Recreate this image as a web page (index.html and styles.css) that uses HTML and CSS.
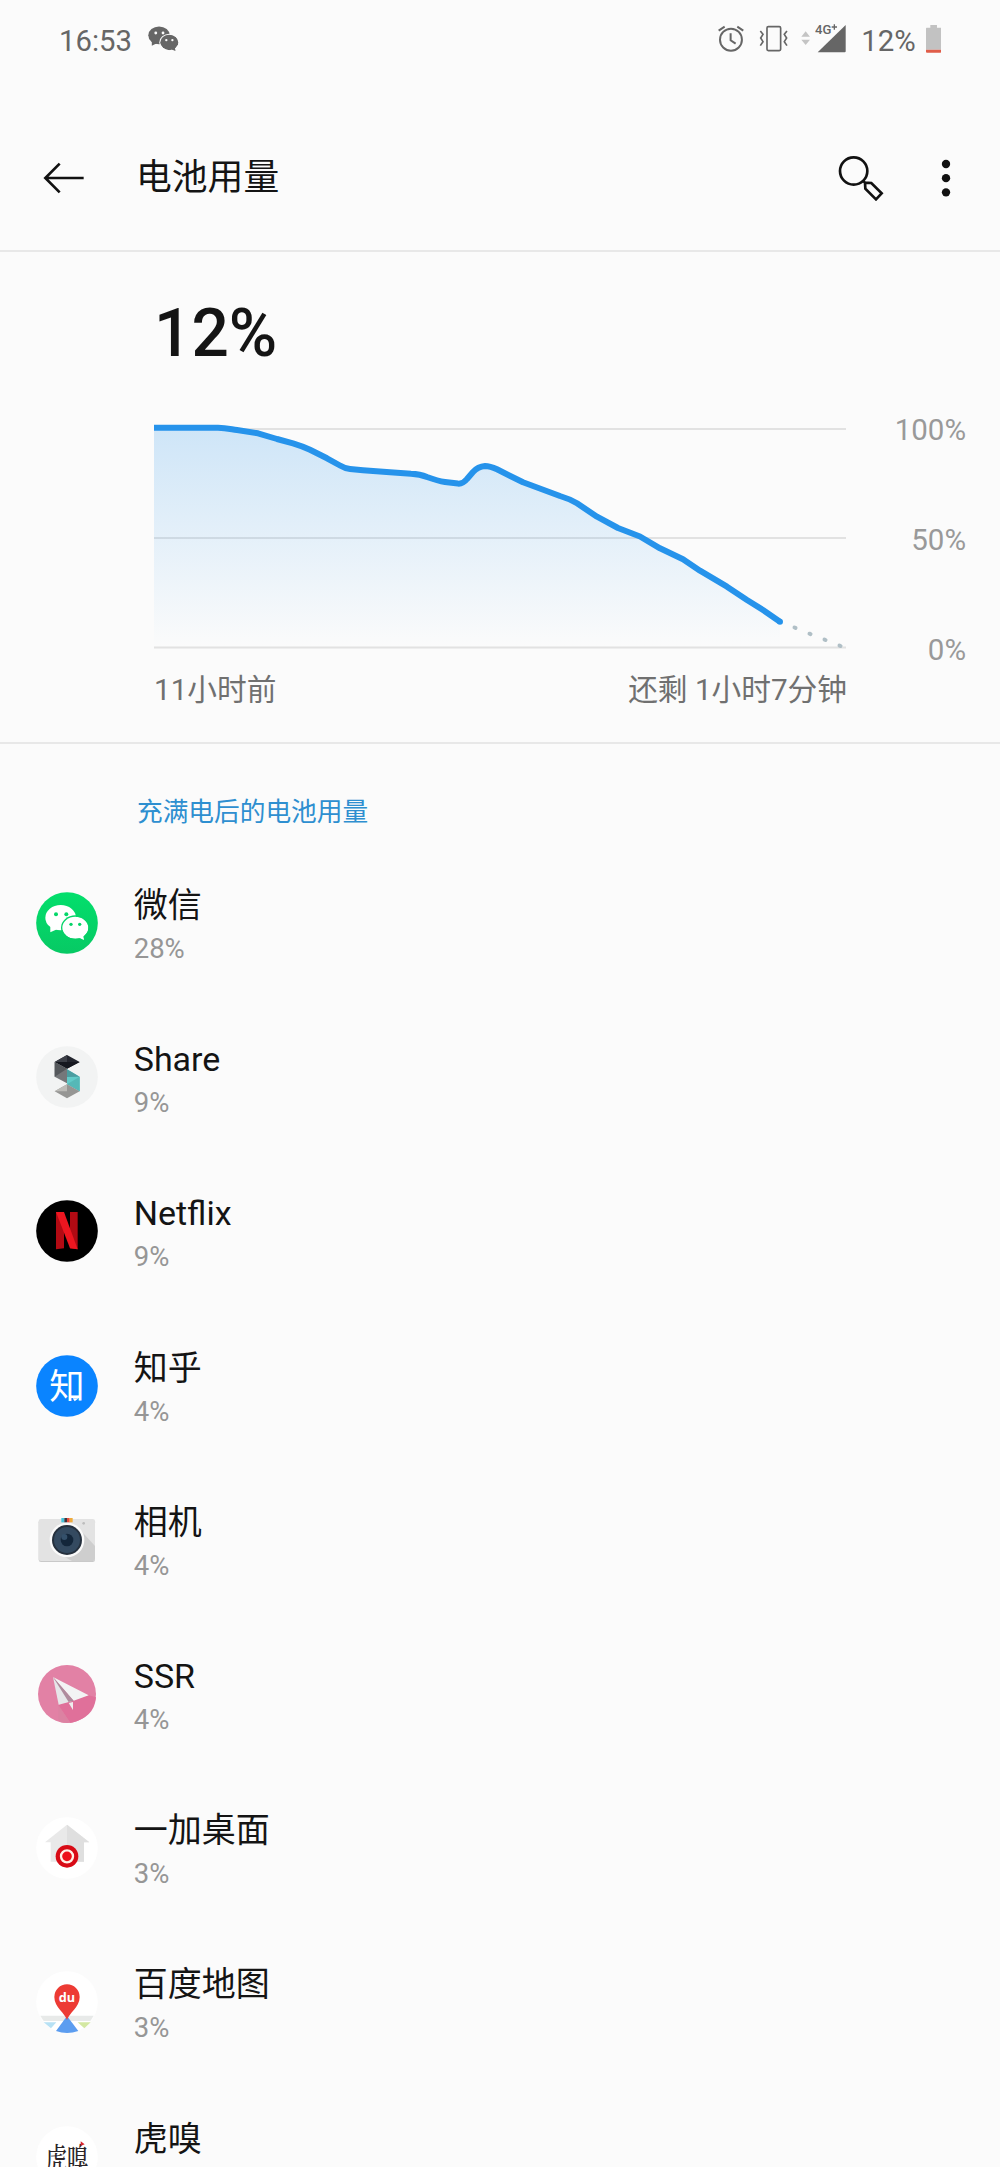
FILE: index.html
```html
<!DOCTYPE html>
<html lang="zh-CN">
<head>
<meta charset="utf-8">
<title>电池用量</title>
<link rel="stylesheet" href="styles.css">
</head>
<body>
<svg class="defs" width="0" height="0" aria-hidden="true">
  <defs>
    <mask id="eyes" maskUnits="userSpaceOnUse" x="-96" y="-96" width="192" height="192">
      <rect x="-96" y="-96" width="192" height="192" fill="#fff"/>
      <circle cx="-33" cy="-26" r="6" fill="#000"/><circle cx="-2" cy="-26" r="6" fill="#000"/>
      <ellipse cx="25" cy="14" rx="43" ry="37" fill="#000"/>
      <path d="M34 45 51 51 49 34Z" fill="#fff"/>
      <ellipse cx="25" cy="14" rx="39" ry="33" fill="#fff"/>
      <circle cx="12" cy="4" r="5" fill="#000"/><circle cx="38" cy="4" r="5" fill="#000"/>
    </mask>
    <g id="chat" mask="url(#eyes)">
      <ellipse cx="-19" cy="-16" rx="46" ry="38"/>
      <path d="M-50 9-50 28-28 18Z"/>
      <ellipse cx="25" cy="14" rx="39" ry="33"/>
      <path d="M32 43 51 51 49 34Z"/>
    </g>
  </defs>
</svg>

<header class="status">
  <span class="status-text">16:53</span>
  <svg class="status-chat" viewBox="-66 -56 132 111" width="31" height="26" fill="#666"><use href="#chat"/></svg>
  <div class="status-right">
    <svg viewBox="53 75 80 84" width="26.6" height="28" fill="none" stroke="#666" stroke-width="6">
      <circle cx="92" cy="119" r="33"/><path d="M91 100V121L106 131M55 92 73 80M111 80 129 92"/>
    </svg>
    <svg class="vibrate" viewBox="176 75 88 84" width="29.3" height="28" fill="none" stroke="#666" stroke-width="5">
      <rect x="200" y="80" width="41" height="72" rx="4"/>
      <path d="M180 93 188 103 181 114 188 125 180 137M260 93 252 103 259 114 252 125 260 137"/>
    </svg>
    <svg class="arrows" viewBox="301 75 28 84" width="9.3" height="28" fill="#c4c4c4"><path d="M302 110 315 94 328 110ZM302 119H328L315 135Z"/></svg>
    <svg viewBox="341 70 95 89" width="31.7" height="29.7" class="signal">
      <path d="M349 158 433 76V155Q433 158 430 158Z" fill="#666"/>
      <text x="341" y="104" class="net" textLength="49" lengthAdjust="spacingAndGlyphs">4G</text><path d="M391 82H407M399 74V90" stroke="#666" stroke-width="4"/>
    </svg>
    <span class="status-text pct">12%</span>
    <svg viewBox="675 75 46 84" width="15.3" height="28"><path d="M677 83H688V75H708V83H719Q721 83 721 86V149H675V86Q675 83 677 83Z" fill="#c2c2c2"/><path d="M675 149H721V156Q721 158 718 158H678Q675 158 675 156Z" fill="#e05d49"/></svg>
  </div>
</header>

<nav class="bar">
  <svg viewBox="130 485 126 96" width="42" height="32" fill="none" stroke="#111" stroke-width="8"><path d="M252 533H138M180 490 137 533 180 576"/></svg>
  <h1>电池用量</h1>
  <svg class="search" viewBox="411 462 138 138" width="46" height="46" fill="none" stroke="#111" stroke-width="8">
    <circle cx="458" cy="510" r="41"/><path d="M487 540 492 545 511 546 542 577 525 595 493 563 492 545"/>
  </svg>
  <svg viewBox="720 476 30 114" width="10" height="38" fill="#111"><circle cx="735" cy="491" r="12.5"/><circle cx="735" cy="533.5" r="12.5"/><circle cx="735" cy="576" r="12.5"/></svg>
</nav>

<section class="battery">
  <div class="level">12%</div>
  <div class="chart">
    <svg class="plot" viewBox="154 420 692 232" width="692" height="232">
      <defs><linearGradient id="fade" gradientUnits="userSpaceOnUse" x1="0" y1="428" x2="0" y2="648"><stop offset="0" stop-color="#2693eb" stop-opacity=".21"/><stop offset="1" stop-color="#2693eb" stop-opacity="0"/></linearGradient></defs>
      <path d="M154 429H846M154 538H846M154 647.5H846" stroke="#e2e2e2" stroke-width="2"/>
      <path fill="url(#fade)" d="M154 427.7H218C226 428 230 429 237 430L258 433.3 277 439 293 443.3Q302 446 310 449.7L327 458.3 340 465.5Q345 468.5 350 469L363 470.2 390 472.3 411 473.7Q420 474 427 477 438 481 445 482L458 483.6Q463 484 467 479L473 472Q478 466.5 485 466 490 466 497 469.3L523 482.3 560 496Q570 499 577 503.3L597 516.7 618 528 640 536.5 660 548.3 683 559.3 700 570.7 727 586.7 747 600 763 610 780 621.7V648H154Z"/>
      <path fill="none" stroke="#2693eb" stroke-width="6" stroke-linejoin="round" d="M154 427.7H218C226 428 230 429 237 430L258 433.3 277 439 293 443.3Q302 446 310 449.7L327 458.3 340 465.5Q345 468.5 350 469L363 470.2 390 472.3 411 473.7Q420 474 427 477 438 481 445 482L458 483.6Q463 484 467 479L473 472Q478 466.5 485 466 490 466 497 469.3L523 482.3 560 496Q570 499 577 503.3L597 516.7 618 528 640 536.5 660 548.3 683 559.3 700 570.7 727 586.7 747 600 763 610 780 621.7"/>
      <circle cx="780" cy="621.7" r="3" fill="#2693eb"/>
      <path d="M794.5 627.5 795.5 627.9M809.5 633.7 810.5 634.1M824.5 639.6 825.5 640M839.5 645.6 840.5 646" stroke="#b0bfc6" stroke-width="4" stroke-linecap="round"/>
    </svg>
    <div class="scale"><span>100%</span><span>50%</span><span>0%</span></div>
  </div>
  <div class="times"><span>11小时前</span><span>还剩 1小时7分钟</span></div>
</section>

<main>
  <h2>充满电后的电池用量</h2>
  <ul class="apps">
    <li>
      <svg viewBox="-96 -96 192 192"><defs><linearGradient id="green" x2="0" y2="1"><stop stop-color="#03df6c"/><stop offset="1" stop-color="#07c964"/></linearGradient></defs><circle r="92.5" fill="url(#green)"/><use href="#chat" fill="#fff"/></svg>
      <div><b>微信</b><span>28%</span></div>
    </li>
    <li>
      <svg viewBox="-96 -96 192 192"><circle r="92.5" fill="#f2f3f3"/>
        <path d="M0-66 38-45 0-25-37-45Z" fill="#23252e"/><path d="M0-66V-45H-37Z" fill="#3c3f47"/><path d="M-37-45H38L0-25Z" fill="#15171f"/>
        <path d="M-37-45 0-25V19L-37-1Z" fill="#75777a"/><path d="M-37-45 0-25-37-1Z" fill="#55585c"/>
        <path d="M0-23 38-1V43L0 22Z" fill="#61cbc9"/><path d="M0 22 38-1V43Z" fill="#55b8b7"/><path d="M0-23 38-1 0 0Z" fill="#4b9da0"/>
        <path d="M0 22 38 43 0 64-37 43Z" fill="#969694"/><path d="M0 22V43H-37Z" fill="#bcbbb7"/>
      </svg>
      <div><b>Share</b><span>9%</span></div>
    </li>
    <li>
      <svg viewBox="-96 -96 192 192"><circle r="92.5"/><path d="M-33-57H-9V52L-33 55ZM9-57H32V55L9 52Z" fill="#b20a13"/><path d="M-33-57H-9L32 55 9 52Z" fill="#ed1620"/></svg>
      <div><b>Netflix</b><span>9%</span></div>
    </li>
    <li>
      <svg viewBox="-96 -96 192 192"><circle r="92.5" fill="#0a84ff"/><text class="zhi" x="-53" y="39">知</text><path d="M17 37H35L23 46Z" fill="#fff"/></svg>
      <div><b>知乎</b><span>4%</span></div>
    </li>
    <li>
      <svg viewBox="-96 -96 192 192"><rect x="-85" y="-60" width="169" height="126" rx="7" fill="#c9c9c9"/><rect x="-85" y="-63" width="169" height="126" rx="7" fill="#e3e3e3"/>
        <path d="M35-35 84 18V56Q84 63 77 63H15L-35 35Z" fill="#cecece"/>
        <path d="M-17-66H-8V-53H-17Z" fill="#46c2da"/><path d="M-8-66H0V-53H-8Z" fill="#3b3841"/><path d="M0-66H8V-53H0Z" fill="#e74a3b"/><path d="M8-66H17V-53H8Z" fill="#efab3c"/>
        <circle r="52" fill="#fafafa"/><circle r="45" fill="#25303d"/><circle r="39" fill="#344a60"/><circle r="19" fill="#13263a"/><circle cx="-8" cy="-9" r="9" fill="#34506a"/><circle cx="50" cy="-50" r="4" fill="#bdbdbd"/>
      </svg>
      <div><b>相机</b><span>4%</span></div>
    </li>
    <li>
      <svg viewBox="-96 -96 192 192"><circle r="87" fill="#e281a5"/><path d="M65 4 87 10Q82 72 10 87L-26 33Z" fill="#e0709a"/><path d="M-26 33 10 86-10 86Q-20 84-26 80Z" fill="#dc82a2"/>
        <path d="M-42-51 65 4 20 20Z" fill="#f3f3f4"/><path d="M-42-51 14 22-25 32Z" fill="#e6e6e9"/><path d="M-42-51 20 20 5 24Z" fill="#ae8b9d"/><path d="M5 27 18 24V48Z" fill="#eee"/>
      </svg>
      <div><b>SSR</b><span>4%</span></div>
    </li>
    <li>
      <svg viewBox="-96 -96 192 192"><circle r="92.5" fill="#fff"/><path d="M0-70-66-17H-49V41H51V-17H67Z" fill="#e9e9e9"/><path d="M0-70V41H51V-17H67Z" fill="#dfdfdf"/><circle cy="25" r="34" fill="#d80b16"/><circle cy="25" r="18" fill="#ed1018" stroke="#fff0e6" stroke-width="7"/></svg>
      <div><b>一加桌面</b><span>3%</span></div>
    </li>
    <li>
      <svg viewBox="-96 -96 192 192"><circle r="92.5" fill="#fff"/><path d="M-80 41H80L70 57H-70Z" fill="#e8eae9"/><path d="M-70 61H-32L-48 79Z" fill="#b7e1f4"/><path d="M32 61H71L52 79Z" fill="#d3e8a2"/>
        <path d="M0 42 34 87Q0 99-33 87Z" fill="#5c9df0"/><path d="M0 54C-6 33-38 16-38-15A38 38 0 0 1 38-15C38 16 6 33 0 54Z" fill="#ed3b34"/><text class="du" x="0" y="0">du</text>
      </svg>
      <div><b>百度地图</b><span>3%</span></div>
    </li>
    <li>
      <svg viewBox="-96 -96 192 192"><circle r="92.5" fill="#fff"/><text class="hu" transform="translate(-64 38) scale(1 1.45)">虎嗅</text><path d="M41-47 53-38 41-33Z" fill="#d8242e"/></svg>
      <div><b>虎嗅</b><span>3%</span></div>
    </li>
  </ul>
</main>
</body>
</html>
```

FILE: styles.css
```css
* { box-sizing: border-box; }
html, body { height: 2167px; overflow: hidden; }
body {
  margin: 0;
  background: #fbfbfb;
  color: #141414;
  font-family: Roboto, "Noto Sans CJK SC", sans-serif;
}
svg { display: block; flex: none; }
.defs { height: 0; }

.status { display: flex; height: 80px; padding: 25px 59px 0 59px; }
.status-text { font-size: 29.3px; line-height: 32px; color: #666; white-space: nowrap; }
.status-chat { margin: 1px 0 0 16px; }
.status-right { display: flex; margin-left: auto; }
.vibrate { margin-left: 14px; }
.arrows { margin-left: 13px; }
.signal { margin: -1.7px 0 0 4px; }
.pct { margin: 0 10px 0 15px; }
.net { font: 500 36px Roboto, sans-serif; fill: #666; }

.bar { display: flex; align-items: center; height: 172px; padding: 25px 49px 0 43px; border-bottom: 2px solid #e8e8e8; }
.bar h1 { flex: 1; margin: 1px 0 0 51px; font-size: 35.8px; font-weight: 400; line-height: 50px; }
.search { margin-right: 57px; }

.battery { height: 492px; padding: 42px 34px 0 154px; border-bottom: 2px solid #e8e8e8; }
.level { font-size: 65.8px; font-weight: 500; line-height: 80px; }
.chart { display: flex; justify-content: space-between; height: 260px; margin-top: 36px; }
.plot { margin-top: 10px; }
.scale { display: flex; flex-direction: column; justify-content: space-between; text-align: right; font-size: 29.5px; line-height: 40px; color: #999; }
.times { display: flex; justify-content: space-between; width: 693px; font-size: 29.7px; line-height: 40px; color: #707070; }

h2 { height: 102px; margin: 0; padding: 48px 0 0 137px; font-size: 25.7px; line-height: 40px; font-weight: 400; color: #2e8fd0; }
.apps { margin: 0; padding: 0; list-style: none; }
.apps li { display: flex; align-items: center; height: 154.2px; padding-left: 34.7px; }
.apps svg { width: 64px; height: 64px; }
.apps div { display: flex; flex-direction: column; align-self: flex-start; gap: 4px; margin-left: 35px; padding-top: 37px; }
.apps b { font-size: 34px; font-weight: 400; line-height: 44px; }
.apps span { font-size: 27.5px; line-height: 36px; color: #969696; }
.zhi { font: 400 106px "Noto Sans CJK SC", sans-serif; fill: #fff; }
.du { font: 700 38px "Open Sans", sans-serif; fill: #fff; text-anchor: middle; }
.hu { font: 500 64px "Noto Serif CJK SC", "Noto Sans CJK SC", serif; fill: #2b2528; }
```
